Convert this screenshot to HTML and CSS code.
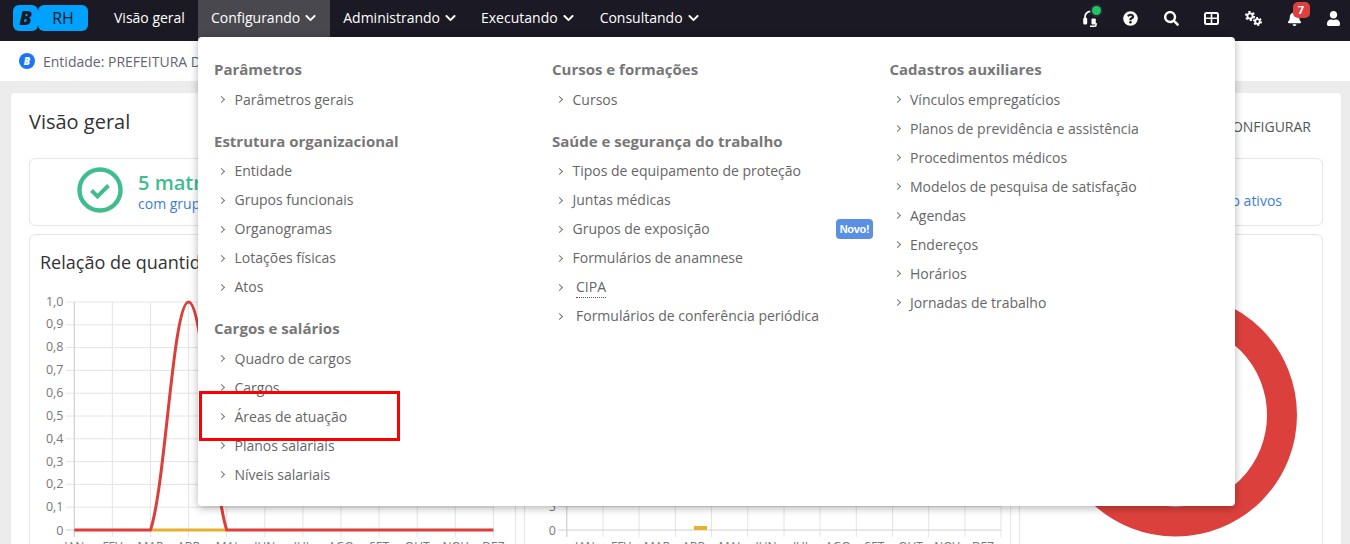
FILE: index.html
```html
<!DOCTYPE html>
<html lang="pt-BR">
<head>
<meta charset="utf-8">
<title>RH - Visão geral</title>
<link rel="stylesheet" href="styles.css">
</head>
<body>
<header class="topbar">
  <div class="logo"><span class="logo-b">B</span><span class="logo-rh">RH</span></div>
  <nav class="nav">
    <a class="nav-item">Visão geral</a>
    <a class="nav-item active">Configurando <svg class="chev" viewBox="0 0 448 512"><path d="M207.029 381.476L12.686 187.132c-9.373-9.373-9.373-24.569 0-33.941l22.667-22.667c9.357-9.357 24.522-9.375 33.901-.04L224 284.505l154.745-154.021c9.379-9.335 24.544-9.317 33.901.04l22.667 22.667c9.373 9.373 9.373 24.569 0 33.941L240.971 381.476c-9.373 9.372-24.569 9.372-33.942 0z"/></svg></a>
    <a class="nav-item">Administrando <svg class="chev" viewBox="0 0 448 512"><path d="M207.029 381.476L12.686 187.132c-9.373-9.373-9.373-24.569 0-33.941l22.667-22.667c9.357-9.357 24.522-9.375 33.901-.04L224 284.505l154.745-154.021c9.379-9.335 24.544-9.317 33.901.04l22.667 22.667c9.373 9.373 9.373 24.569 0 33.941L240.971 381.476c-9.373 9.372-24.569 9.372-33.942 0z"/></svg></a>
    <a class="nav-item">Executando <svg class="chev" viewBox="0 0 448 512"><path d="M207.029 381.476L12.686 187.132c-9.373-9.373-9.373-24.569 0-33.941l22.667-22.667c9.357-9.357 24.522-9.375 33.901-.04L224 284.505l154.745-154.021c9.379-9.335 24.544-9.317 33.901.04l22.667 22.667c9.373 9.373 9.373 24.569 0 33.941L240.971 381.476c-9.373 9.372-24.569 9.372-33.942 0z"/></svg></a>
    <a class="nav-item">Consultando <svg class="chev" viewBox="0 0 448 512"><path d="M207.029 381.476L12.686 187.132c-9.373-9.373-9.373-24.569 0-33.941l22.667-22.667c9.357-9.357 24.522-9.375 33.901-.04L224 284.505l154.745-154.021c9.379-9.335 24.544-9.317 33.901.04l22.667 22.667c9.373 9.373 9.373 24.569 0 33.941L240.971 381.476c-9.373 9.372-24.569 9.372-33.942 0z"/></svg></a>
  </nav>
  <div class="tools">
    <span class="tool">
      <svg class="ico-headset" viewBox="0 0 14 17"><path class="hs-arc" d="M2 9V7a5.5 5.5 0 0 1 8-5"/><rect class="hs-fill" x="0.2" y="7.5" width="4" height="7" rx="1.5"/><rect class="hs-fill" x="8.5" y="8.5" width="4.3" height="6" rx="1"/><path class="hs-arc" d="M13 13v2a1.2 1.2 0 0 1-1.2 1.2H7"/></svg>
      <i class="dot"></i>
    </span>
    <span class="tool"><svg class="ico-help" viewBox="0 0 512 512"><path d="M504 256c0 136.997-111.043 248-248 248S8 392.997 8 256C8 119.083 119.043 8 256 8s248 111.083 248 248zM262.655 90c-54.497 0-89.255 22.957-116.549 63.758-3.536 5.286-2.353 12.415 2.715 16.258l34.699 26.31c5.205 3.947 12.621 3.008 16.665-2.122 17.864-22.658 30.113-35.797 57.303-35.797 20.429 0 45.698 13.148 45.698 32.958 0 14.976-12.363 22.667-32.534 33.976C247.128 238.528 216 254.941 216 296v4c0 6.627 5.373 12 12 12h56c6.627 0 12-5.373 12-12v-1.333c0-28.462 83.186-29.647 83.186-106.667 0-58.002-60.165-102-116.531-102zM256 338c-25.365 0-46 20.635-46 46 0 25.364 20.635 46 46 46s46-20.636 46-46c0-25.365-20.635-46-46-46z"/></svg></span>
    <span class="tool"><svg class="ico-search" viewBox="0 0 512 512"><path d="M505 442.7L405.3 343c-4.5-4.5-10.6-7-17-7H372c27.6-35.3 44-79.7 44-128C416 93.1 322.9 0 208 0S0 93.1 0 208s93.1 208 208 208c48.3 0 92.7-16.4 128-44v16.3c0 6.4 2.5 12.5 7 17l99.7 99.7c9.4 9.4 24.6 9.4 33.9 0l28.3-28.3c9.4-9.4 9.4-24.6.1-34zM208 336c-70.7 0-128-57.2-128-128 0-70.7 57.2-128 128-128 70.7 0 128 57.2 128 128 0 70.7-57.2 128-128 128z"/></svg></span>
    <span class="tool"><svg class="ico-table" viewBox="0 0 15 13"><rect class="tb-frame" x="1" y="1" width="13" height="11" rx="1.5"/><path class="tb-line" d="M7.5 1v11M1 6.2h13"/></svg></span>
    <span class="tool"><svg class="ico-cogs" viewBox="0 0 18 15">
      <circle class="cog-teeth big" cx="6" cy="5" r="3.9"/><circle class="cog-hub" cx="6" cy="5" r="2.6"/>
      <circle class="cog-teeth small" cx="13.5" cy="10.5" r="3.4"/><circle class="cog-hub" cx="13.5" cy="10.5" r="2.3"/>
    </svg></span>
    <span class="tool"><svg class="ico-bell" viewBox="0 0 448 512"><path d="M224 512c35.32 0 63.97-28.65 63.97-64H160.03c0 35.35 28.65 64 63.97 64zm215.39-149.71c-19.32-20.76-55.47-51.99-55.47-154.29 0-77.7-54.48-139.9-127.94-155.16V32c0-17.67-14.32-32-31.98-32s-31.98 14.33-31.98 32v20.84C118.56 68.1 64.08 130.3 64.08 208c0 102.3-36.15 133.53-55.47 154.29-6 6.45-8.66 14.16-8.61 21.71.11 16.4 12.98 32 32.1 32h383.8c19.12 0 32-15.6 32.1-32 .05-7.55-2.61-15.27-8.61-21.71z"/></svg><b class="badge">7</b></span>
    <span class="tool"><svg class="ico-user" viewBox="0 0 448 512"><path d="M224 256c70.7 0 128-57.3 128-128S294.7 0 224 0 96 57.3 96 128s57.3 128 128 128zm89.6 32h-16.7c-22.2 10.2-46.9 16-72.9 16s-50.6-5.8-72.9-16h-16.7C60.2 288 0 348.2 0 422.4V464c0 26.5 21.5 48 48 48h352c26.5 0 48-21.5 48-48v-41.6c0-74.2-60.2-134.4-134.4-134.4z"/></svg></span>
  </div>
</header>

<div class="entity"><span class="entity-ico">B</span><span>Entidade: PREFEITURA DO MUNICÍPIO</span></div>

<main class="page">
  <div class="panel-head">
    <h1 class="panel-title">Visão geral</h1>
    <a class="config">CONFIGURAR</a>
  </div>
  <section class="summary">
    <div class="summary-left">
      <svg class="check" viewBox="0 0 46 46"><circle class="check-ring" cx="23" cy="23" r="20.5"/><path class="check-mark" d="M14.5 23.5l6 6 11-11"/></svg>
      <div>
        <div class="summary-num">5 matrículas</div>
        <div class="summary-sub">com grupo funcional</div>
      </div>
    </div>
    <div class="summary-sub">com vínculo ativos</div>
  </section>
  <section class="charts">
    <article class="chart-card">
      <h2 class="chart-title">Relação de quantidade</h2>
      <svg class="chart" viewBox="30 285 485 270">
        <path class="grid" d="M112.4 302V537M150.5 302V537M188.6 302V537M226.7 302V537M264.8 302V537M302.9 302V537M341 302V537M379.1 302V537M417.2 302V537M455.3 302V537M493.4 302V537"/>
        <path class="grid" d="M66 302H493.4M66 324.8H493.4M66 347.6H493.4M66 370.4H493.4M66 393.2H493.4M66 416H493.4M66 438.8H493.4M66 461.6H493.4M66 484.4H493.4M66 507.2H493.4"/>
        <path class="axis" d="M74.3 302V537M66 530H493.4"/>
        <g class="ylabels">
          <text x="63.5" y="305.5">1,0</text><text x="63.5" y="327.5">0,9</text><text x="63.5" y="350.5">0,8</text><text x="63.5" y="373.5">0,7</text><text x="63.5" y="396.5">0,6</text><text x="63.5" y="419.5">0,5</text><text x="63.5" y="442.5">0,4</text><text x="63.5" y="465.5">0,3</text><text x="63.5" y="487.5">0,2</text><text x="63.5" y="510.5">0,1</text><text x="63.5" y="534.5">0</text>
        </g>
        <g class="xlabels">
          <text x="74.3" y="551">JAN</text><text x="112.4" y="551">FEV</text><text x="150.5" y="551">MAR</text><text x="188.6" y="551">ABR</text><text x="226.7" y="551">MAI</text><text x="264.8" y="551">JUN</text><text x="302.9" y="551">JUL</text><text x="341" y="551">AGO</text><text x="379.1" y="551">SET</text><text x="417.2" y="551">OUT</text><text x="455.3" y="551">NOV</text><text x="493.4" y="551">DEZ</text>
        </g>
        <path class="line-yellow" d="M150.5 530H226.7"/>
        <path class="line-red" d="M74.3 530H150.5C165.7 484 173 302 188.6 302C204 302 212 484 226.7 530H493.4"/>
      </svg>
    </article>
    <article class="chart-card">
      <h2 class="chart-title">Relação de admissões</h2>
      <svg class="chart" viewBox="525 285 485 270">
        <path class="grid" d="M603 300V537M639 300V537M675.4 300V537M711.5 300V537M747.7 300V537M784 300V537M820 300V537M856.3 300V537M892.5 300V537M928.7 300V537M965 300V537M1001 300V537"/>
        <path class="grid" d="M558 506.5H1001M558 483H1001M558 459.5H1001M558 436H1001M558 412.5H1001M558 389H1001M558 365.5H1001M558 342H1001M558 318.5H1001"/>
        <path class="axis" d="M566.8 300V537M558 530H1001"/>
        <g class="ylabels">
          <text x="556" y="511">5</text><text x="556" y="534.5">0</text>
        </g>
        <g class="xlabels">
          <text x="585" y="551">JAN</text><text x="621" y="551">FEV</text><text x="657" y="551">MAR</text><text x="693.5" y="551">ABR</text><text x="729.5" y="551">MAI</text><text x="766" y="551">JUN</text><text x="802" y="551">JUL</text><text x="838" y="551">AGO</text><text x="874.5" y="551">SET</text><text x="910.5" y="551">OUT</text><text x="947" y="551">NOV</text><text x="983" y="551">DEZ</text>
        </g>
        <rect class="bar" x="694" y="526" width="13" height="4"/>
      </svg>
    </article>
    <article class="chart-card">
      <h2 class="chart-title">Situação</h2>
      <svg class="chart" viewBox="1020 285 302 270"><circle class="donut" cx="1175.5" cy="415" r="106.5"/></svg>
    </article>
  </section>
</main>

<div class="menu">
  <div class="menu-col">
    <h3>Parâmetros</h3>
    <ul><li>Parâmetros gerais</li></ul>
    <h3>Estrutura organizacional</h3>
    <ul><li>Entidade</li><li>Grupos funcionais</li><li>Organogramas</li><li>Lotações físicas</li><li>Atos</li></ul>
    <h3>Cargos e salários</h3>
    <ul><li>Quadro de cargos</li><li>Cargos</li><li>Áreas de atuação</li><li>Planos salariais</li><li>Níveis salariais</li></ul>
  </div>
  <div class="menu-col">
    <h3>Cursos e formações</h3>
    <ul><li>Cursos</li></ul>
    <h3>Saúde e segurança do trabalho</h3>
    <ul>
      <li>Tipos de equipamento de proteção</li><li>Juntas médicas</li>
      <li class="has-badge">Grupos de exposição<span class="novo">Novo!</span></li>
      <li>Formulários de anamnese</li>
      <li class="indent"><span class="dotted">CIPA</span></li>
      <li class="indent">Formulários de conferência periódica</li>
    </ul>
  </div>
  <div class="menu-col">
    <h3>Cadastros auxiliares</h3>
    <ul><li>Vínculos empregatícios</li><li>Planos de previdência e assistência</li><li>Procedimentos médicos</li><li>Modelos de pesquisa de satisfação</li><li>Agendas</li><li>Endereços</li><li>Horários</li><li>Jornadas de trabalho</li></ul>
  </div>
</div>
<div class="highlight"></div>
</body>
</html>
```

FILE: styles.css
```css
* { box-sizing: border-box; }
html, body { margin: 0; height: 544px; overflow: hidden; }
body { background: #ececec; font-family: "Open Sans", sans-serif; font-size: 14px; color: #555; position: relative; }
h1, h2, h3, ul { margin: 0; padding: 0; font-weight: 400; }
ul { list-style: none; }

/* top bar */
.topbar { height: 41px; background: #1b1a24; display: flex; align-items: stretch; padding-left: 13px; color: #fff; }
.logo { display: flex; height: 26px; margin-top: 5px; width: 75px; }
.logo-b { width: 25px; background: #00a2ff; border-radius: 6px; color: #1b1a24; font-weight: 800; font-style: italic; font-size: 20px; line-height: 26px; text-align: center; }
.logo-rh { width: 50px; background: #00a2ff; border-radius: 6px; color: #1b1a24; font-size: 16px; line-height: 26px; text-align: center; }
.nav { display: flex; margin-left: 13px; }
.nav-item { display: flex; align-items: center; gap: 5px; padding: 0 13px 7px; font-size: 14px; font-weight: 400; white-space: nowrap; }
.nav-item.active { background: #4a484f; padding-right: 14px; }
.nav-item.active + .nav-item { padding-right: 12px; }
.chev { width: 11px; height: 12px; fill: #fff; margin-top: 1px; }
.tools { margin-left: auto; display: flex; align-items: center; gap: 24.5px; padding: 0 9px 5px 0; }
.tool { position: relative; width: 16px; height: 18px; display: flex; align-items: center; justify-content: center; fill: #fff; }
.ico-help { width: 15px; height: 15px; margin-right: 1px; flex: none; }
.ico-search { width: 15px; height: 15px; margin-left: 1px; flex: none; }
.ico-bell { width: 15px; height: 15px; margin-left: 4px; flex: none; }
.ico-user { width: 13px; height: 15px; flex: none; }
.ico-table { width: 15px; height: 13px; flex: none; }
.tb-frame { fill: none; stroke: #fff; stroke-width: 2; }
.tb-line { stroke: #fff; stroke-width: 1.6; fill: none; }
.ico-cogs { width: 18px; height: 15px; margin-left: 2px; flex: none; }
.cog-teeth { fill: none; stroke: #fff; }
.cog-teeth.big { stroke-width: 2.4; stroke-dasharray: 2.1 1.99; }
.cog-teeth.small { stroke-width: 2.2; stroke-dasharray: 1.8 1.76; }
.cog-hub { fill: #1b1a24; stroke: #fff; stroke-width: 1.8; }
.ico-headset { width: 14px; height: 17px; flex: none; margin-top: 1px; }
.hs-arc { fill: none; stroke: #fff; stroke-width: 1.6; }
.hs-fill { fill: #fff; }
.dot { position: absolute; top: -3px; right: -3px; width: 9px; height: 9px; border-radius: 50%; background: #22c55e; box-shadow: 0 0 0 2px #1f2f40; }
.badge { position: absolute; top: -7px; left: 8px; width: 17px; height: 16px; background: #e03f3f; border-radius: 5px; color: #fff; font-size: 11px; font-weight: 700; line-height: 16px; text-align: center; }

/* entity */
.entity { height: 40px; background: #fff; display: flex; align-items: center; gap: 8px; padding-left: 19px; color: #5f6670; font-size: 14px; }
.entity-ico { width: 16px; height: 16px; border-radius: 50%; background: #1877f2; color: #fff; font-size: 10px; font-weight: 800; font-style: italic; line-height: 16px; text-align: center; }

/* panel */
.page { margin: 12px 9px 0 11px; padding: 0 18px; background: #fff; border-radius: 4px; height: 500px; }
.panel-head { height: 65px; display: flex; justify-content: space-between; }
.panel-title { font-size: 20px; line-height: 27px; margin-top: 15px; color: #333; }
.config { font-size: 14px; line-height: 20px; margin: 24px 12px 0 0; color: #555; }
.summary { height: 68px; border: 1px solid #e5e5e5; border-radius: 6px; display: flex; justify-content: space-between; align-items: flex-start; padding-right: 40px; }
.summary-left { display: flex; margin-left: 47px; margin-top: 8px; gap: 15px; align-items: center; }
.check { width: 46px; height: 46px; }
.check-ring { fill: none; stroke: #3fbd8f; stroke-width: 4.4; }
.check-mark { fill: none; stroke: #3fbd8f; stroke-width: 4; }
.summary-num { font-size: 20px; font-weight: 600; line-height: 26px; color: #3fbd8f; }
.summary-sub { font-size: 14px; line-height: 15px; color: #3b7ddb; }
.summary > .summary-sub { margin-top: 34px; }
.charts { display: grid; grid-template-columns: 487px 487px 304px; gap: 8px; margin-top: 8px; }
.chart-card { border: 1px solid #e5e5e5; border-radius: 6px; height: 330px; }
.chart-title { font-size: 18px; line-height: 24px; padding: 15px 10px 0; color: #333; white-space: nowrap; }
.chart { display: block; width: 100%; margin-top: 11px; }
.grid { stroke: #e4e4e4; stroke-width: 1; fill: none; }
.axis { stroke: #cfcfcf; stroke-width: 1.2; fill: none; }
.ylabels text { font-size: 12.5px; fill: #777; text-anchor: end; }
.xlabels text { font-size: 12px; fill: #777; text-anchor: middle; }
.line-yellow { stroke: #e6b030; stroke-width: 3; fill: none; }
.line-red { stroke: #dc3f3a; stroke-width: 3; fill: none; stroke-linejoin: round; }
.bar { fill: #e6b030; }
.donut { fill: none; stroke: #dc403c; stroke-width: 30; }

/* dropdown */
.menu { position: absolute; left: 198px; top: 37px; width: 1037px; height: 469px; background: #fff; border-radius: 4px; box-shadow: 0 2px 8px rgba(0,0,0,.3); display: grid; grid-template-columns: 338px 337.5px 1fr; padding: 22.3px 0 0 16px; color: #666; }
.menu h3 { height: 20px; font-size: 15px; line-height: 20px; font-weight: 700; color: #777; margin-bottom: 5.6px; }
.menu ul { margin-bottom: 16.8px; }
.menu li { position: relative; height: 29px; line-height: 29px; padding-left: 20.5px; white-space: nowrap; }
.menu li::before { content: ""; position: absolute; left: 5px; top: 12.5px; width: 4px; height: 4px; border-top: 1px solid #777; border-right: 1px solid #777; transform: rotate(45deg); }
.menu li.indent { padding-left: 24px; }
.has-badge { display: flex; justify-content: space-between; align-items: center; width: 321px; }
.novo { width: 37px; height: 20px; background: #5b8fe3; border-radius: 4px; color: #fff; font-family: "Liberation Sans", sans-serif; font-size: 11px; font-weight: 700; letter-spacing: -0.3px; line-height: 20px; text-align: center; }
.dotted { border-bottom: 1px dotted #555; padding-bottom: 1px; }
.highlight { position: absolute; left: 199px; top: 391px; width: 201px; height: 50px; border: 3px solid #f00; }
```
